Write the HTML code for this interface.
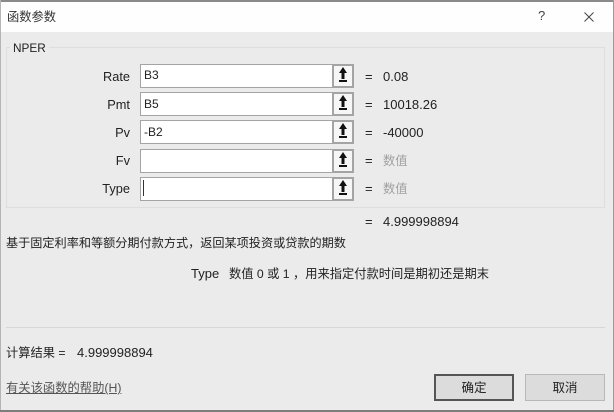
<!DOCTYPE html>
<html>
<head>
<meta charset="utf-8">
<style>
html,body{margin:0;padding:0;width:614px;height:412px;overflow:hidden;background:#ebebeb}
#r{position:relative;width:614px;height:412px;overflow:hidden;background:#ebebeb;filter:blur(.35px);font-family:"Liberation Sans","Noto Sans CJK SC",sans-serif;font-size:13px;color:#222}
#r div{position:absolute;box-sizing:border-box}
.t{white-space:nowrap;line-height:16px;height:16px}
.lab{right:484px;text-align:right;font-size:12.8px}
.in{left:140px;width:193px;height:24px;background:#fff;border:1.5px solid #a4a4a4}
.btn{left:332px;width:22px;height:24px;background:#f6f6f6;border:2px solid #a4a4a4}
.btn svg{position:absolute;left:2px;top:1px}
.eq{left:365px;font-size:13px}
.val{left:383px;font-size:13px}
.g{color:#a0a0a0}
.b{height:27px;top:374px;text-align:center;line-height:24px;background:#dcdcdc;font-size:12.5px}
</style>
</head>
<body>
<div id="r">
<div style="left:0;top:0;width:614px;height:32px;background:#fefefe"></div>
<div style="left:0;top:0;width:614px;height:2px;background:#8a8a8a"></div>
<div style="left:613px;top:0;width:1px;height:412px;background:#9a9a9a"></div>
<div style="left:0;top:0;width:1px;height:412px;background:#b5b5b5"></div>
<div class="t" style="left:7px;top:9px;font-size:12.25px;color:#333">函数参数</div>
<div class="t" style="left:538px;top:8px;font-size:13px;color:#444">?</div>
<svg style="position:absolute;left:584px;top:12px" width="10" height="10"><path d="M.5.5L9.5 9.500M9.500.5L.5 9.500" stroke="#444" stroke-width="1" fill="none"/></svg>

<div style="left:6px;top:47px;width:599px;height:161px;border:1px solid #dedede"></div>
<div class="t" style="left:10px;top:40px;padding:0 3px;background:#ebebeb;font-size:11.8px">NPER</div>

<div class="t lab" style="top:69px">Rate</div>
<div class="in" style="top:64px"></div>
<div class="t" style="left:144px;top:67px;font-size:12px">B3</div>
<div class="btn" style="top:64px"><svg width="14" height="17"><path d="M7 0L11 6H8.500V12H5.500V6H3Z" fill="#111"/><rect x="3" y="13" width="8" height="2" fill="#111"/></svg></div>
<div class="t eq" style="top:69px">=</div>
<div class="t val" style="top:69px">0.08</div>

<div class="t lab" style="top:97px">Pmt</div>
<div class="in" style="top:92px"></div>
<div class="t" style="left:144px;top:96px;font-size:12px">B5</div>
<div class="btn" style="top:92px"><svg width="14" height="17"><path d="M7 0L11 6H8.500V12H5.500V6H3Z" fill="#111"/><rect x="3" y="13" width="8" height="2" fill="#111"/></svg></div>
<div class="t eq" style="top:97px">=</div>
<div class="t val" style="top:97px">10018.26</div>

<div class="t lab" style="top:125px">Pv</div>
<div class="in" style="top:120px"></div>
<div class="t" style="left:144px;top:124px;font-size:12px">-B2</div>
<div class="btn" style="top:120px"><svg width="14" height="17"><path d="M7 0L11 6H8.500V12H5.500V6H3Z" fill="#111"/><rect x="3" y="13" width="8" height="2" fill="#111"/></svg></div>
<div class="t eq" style="top:125px">=</div>
<div class="t val" style="top:125px">-40000</div>

<div class="t lab" style="top:153px">Fv</div>
<div class="in" style="top:149px"></div>
<div class="btn" style="top:149px"><svg width="14" height="17"><path d="M7 0L11 6H8.500V12H5.500V6H3Z" fill="#111"/><rect x="3" y="13" width="8" height="2" fill="#111"/></svg></div>
<div class="t eq" style="top:153px">=</div>
<div class="t val g" style="top:153px;font-size:12.25px">数值</div>

<div class="t lab" style="top:181px">Type</div>
<div class="in" style="top:177px"></div>
<div style="left:143px;top:180px;width:1px;height:16px;background:#333"></div>
<div class="btn" style="top:177px"><svg width="14" height="17"><path d="M7 0L11 6H8.500V12H5.500V6H3Z" fill="#111"/><rect x="3" y="13" width="8" height="2" fill="#111"/></svg></div>
<div class="t eq" style="top:181px">=</div>
<div class="t val g" style="top:181px;font-size:12.25px">数值</div>

<div class="t eq" style="top:214px">=</div>
<div class="t val" style="top:214px">4.999998894</div>

<div class="t" style="left:6px;top:235px;font-size:12.15px">基于固定利率和等额分期付款方式，返回某项投资或贷款的期数</div>

<div class="t" style="left:191px;top:266px;font-size:13px">Type</div>
<div class="t" style="left:229px;top:266px;font-size:12.25px">数值 0 或 1 ，用来指定付款时间是期初还是期末</div>

<div style="left:6px;top:327px;width:599px;height:1px;background:#d6d6d6"></div>

<div class="t" style="left:6px;top:345px;font-size:12.25px">计算结果 =</div>
<div class="t" style="left:77px;top:345px;font-size:13px">4.999998894</div>

<div class="t" style="left:6px;top:380px;font-size:12.3px;color:#555;text-decoration:underline">有关该函数的帮助(H)</div>

<div class="b" style="left:434px;width:80px;border:2px solid #555">确定</div>
<div class="b" style="left:525px;width:80px;border:1px solid #b8b8b8;line-height:26px">取消</div>

<div style="left:0;top:410px;width:614px;height:2px;background:#7d7d7d"></div>
</div>
</body>
</html>
